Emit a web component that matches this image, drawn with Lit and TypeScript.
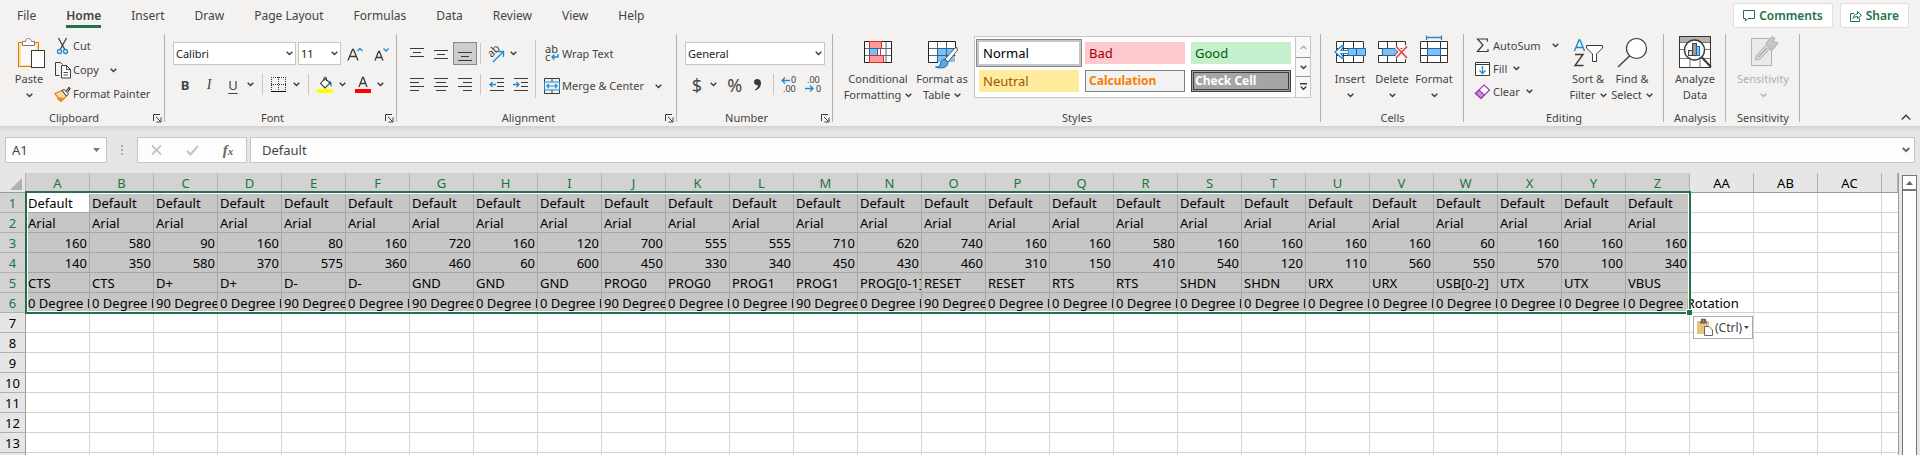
import { LitElement, html, svg, css } from "lit";
import { customElement, state } from "lit/decorators.js";
import { classMap } from "lit/directives/class-map.js";

const INK = "#3b3a39";
const BLUE = "#1e8bcd";

const icon = (w: number, h: number, body: unknown) =>
  html`<svg width=${w} height=${h} viewBox="0 0 ${w} ${h}" fill="none" aria-hidden="true">${body}</svg>`;

const chev = (color = INK) =>
  icon(7, 5, svg`<path d="M.7 .8 3.5 3.5 6.3 .8" stroke=${color} stroke-width="1.4"/>`);

const lines = (ys: number[], spans: number[][]) =>
  icon(14, 16, svg`${ys.map((y, i) => svg`<path d="M${spans[i][0]} ${y}H${spans[i][1]}" stroke=${INK}/>`)}`);

const FULL = [0, 14];
const MID = [3, 11];

const ICONS = {
  paste: icon(32, 36, svg`
    <rect x="5.5" y="8.5" width="20" height="24" fill="#fbdf9f" stroke="#e07a10"/>
    <rect x="8" y="11" width="15" height="20" fill="#faf9f8"/>
    <path d="M9.5 11.500V7.500H12.500C13 5.500 14 4.500 15.500 4.500S18 5.500 18.500 7.500H21.500V11.500Z" fill="#fff" stroke="#777"/>
    <rect x="18.500" y="16.500" width="13" height="17" fill="#fff" stroke=${INK}/>`),
  cut: icon(17, 17, svg`
    <path d="M4.500 0 11 12M12.500 0 6 12" stroke=${INK} stroke-width="1.200"/>
    <circle cx="5.500" cy="13.500" r="2" stroke=${BLUE} stroke-width="1.300"/><circle cx="11.500" cy="13.500" r="2" stroke=${BLUE} stroke-width="1.300"/>`),
  copy: icon(17, 17, svg`
    <path d="M5.500 13.500H1.500V.500H6.500L8.500 2.500" stroke=${INK}/>
    <path d="M7.500 3.500H12.500L16.500 7.500V16H7.500Z" fill="#fff" stroke=${INK}/>
    <path d="M12.500 3.500V7.500H16.500M9.500 10.500H14M9.500 13H14" stroke=${INK} stroke-width=".9"/>`),
  painter: icon(17, 17, svg`
    <path d="M1 7.500 8 4.500 12.500 10 7 15.500 4 13 3.500 11Z" fill="#fbd9a0" stroke="#e07a10" stroke-width="1.200"/>
    <path d="M3.500 11 7 15.500 10 12Z" fill="#f08a24"/>
    <path d="M8 4.500 10.500 3.500 14.500 8 12.500 10Z" fill="#fff" stroke=${INK}/>
    <path d="M12 5.500 15 1.500 16 2.500 13.500 6.500" fill="#fff" stroke=${INK} stroke-width="1.200"/>`),
  grow: icon(16, 16, svg`<path d="M1 14.500 5.500 3.500H6.500L11 14.500M2.800 10.500H9.200" stroke=${INK} stroke-width="1.300"/><path d="M10.500 5 13 2.500 15.500 5" stroke=${BLUE} stroke-width="1.300"/>`),
  shrink: icon(16, 16, svg`<path d="M2 14.500 5.600 5.500H6.400L10 14.500M3.500 11.500H8.500" stroke=${INK} stroke-width="1.300"/><path d="M10.500 2.500 13 5 15.500 2.500" stroke=${BLUE} stroke-width="1.300"/>`),
  borders: icon(16, 16, svg`
    <path d="M0 .5H15M0 7.500H15M.5 0V14M7.500 0V14M14.500 0V14" stroke=${INK} stroke-dasharray="1 1"/>
    <path d="M0 14.500H15" stroke="#111"/>`),
  bucket: icon(16, 17, svg`
    <path d="M3.500 7.500 8 2.500 13 7 8 12Z" fill="#fff" stroke=${INK} stroke-width="1.100"/>
    <path d="M7 5V2.200C7 .8 9.500 .8 9.500 2.200V5" stroke=${INK}/>
    <path d="M12.200 4.500C14.500 5 15 7 14.500 11 13.500 9.500 12.500 8.500 13 7Z" fill="#1f6fb5"/>
    <rect y="13" width="16" height="4" fill="#ff0"/>`),
  fontColor: icon(16, 17, svg`<path d="M4 11 7.600 1.500H8.400L12 11M5.200 7.500H10.800" stroke=${INK} stroke-width="1.300"/><rect y="13" width="16" height="4" fill="#f00"/>`),
  alignTop: lines([2.5, 6.5, 10.500], [FULL, MID, FULL]),
  alignMiddle: lines([4.5, 8.5, 12.500], [FULL, MID, FULL]),
  alignBottom: lines([6.5, 10.500, 14.500], [FULL, MID, FULL]),
  left: lines([1.5, 5.5, 9.5, 13.500], [FULL, [0, 9], FULL, [0, 9]]),
  center: lines([1.5, 5.5, 9.5, 13.500], [FULL, [2, 12], FULL, [2, 12]]),
  right: lines([1.5, 5.5, 9.5, 13.500], [FULL, [5, 14], FULL, [5, 14]]),
  orient: icon(18, 18, svg`
    <text x="0" y="0" transform="translate(4.500 13) rotate(-45)" font-family="Noto Sans" font-size="11" fill=${INK}>ab</text>
    <path d="M6 17 16 7M11 6.500H16.500V12" stroke=${BLUE} stroke-width="1.400"/>`),
  outdent: icon(15, 14, svg`<path d="M1 .5H15M8 4.500H15M8 8.500H15M1 12.500H15" stroke=${INK}/><path d="M7 6.500H1M3.500 4 1 6.500 3.500 9" stroke=${BLUE} stroke-width="1.300"/>`),
  indent: icon(15, 14, svg`<path d="M1 .5H15M8 4.500H15M8 8.500H15M1 12.500H15" stroke=${INK}/><path d="M0 6.500H6M3.500 4 6 6.500 3.500 9" stroke=${BLUE} stroke-width="1.300"/>`),
  wrap: icon(16, 18, svg`
    <text x="1" y="8" font-family="Noto Sans" font-size="11" fill=${INK}>ab</text>
    <text x="1" y="16" font-family="Noto Sans" font-size="11" fill=${INK}>c</text>
    <path d="M14 9V12H8M10.500 9.500 8 12 10.500 14.800" stroke=${BLUE} stroke-width="1.400"/>`),
  merge: icon(16, 16, svg`
    <path d="M.5 .5H15.500V15.500H.5ZM8 .5V4M8 12V15.500" stroke=${INK}/>
    <rect x=".5" y="4" width="15" height="8" fill="#eaf4fb" stroke=${BLUE}/>
    <path d="M3 8H13M5 5.800 2.800 8 5 10.200M11 5.800 13.200 8 11 10.200" stroke=${BLUE} stroke-width="1.200"/>`),
  incDecimal: icon(17, 17, svg`
    <text x="10" y="7" font-family="Noto Sans" font-size="9" fill=${INK}>0</text>
    <text x="2" y="16" font-family="Noto Sans" font-size="9" fill=${INK}>.00</text>
    <path d="M9 4.500H1M4 1.500 1 4.500 4 7.500" stroke=${BLUE} stroke-width="1.300"/>`),
  decDecimal: icon(17, 17, svg`
    <text x="2" y="7" font-family="Noto Sans" font-size="9" fill=${INK}>.00</text>
    <text x="11" y="16" font-family="Noto Sans" font-size="9" fill=${INK}>0</text>
    <path d="M0 12.500H8M5 9.500 8 12.500 5 15.500" stroke=${BLUE} stroke-width="1.300"/>`),
  conditional: icon(32, 36, svg`
    <path d="M2.500 7.500H29.500V28.500H2.500ZM7.500 7.500V28.500M13 7.500V28.500M18.500 7.500V28.500M24 7.500V28.500M2.500 14.500H29.500M2.500 21.500H29.500" fill="#fff" stroke="#666"/>
    <path d="M2.500 7.500H29.500V28.500H2.500Z" stroke="#222"/>
    <rect x="7.500" y="7.500" width="12" height="7" fill="#ff9a9e" stroke="#dc2a22"/>
    <rect x="7.500" y="14.500" width="8" height="7" fill="#83beec" stroke="#1569b0"/>
    <rect x="7.500" y="21.500" width="14" height="7" fill="#ff9a9e" stroke="#dc2a22"/>`),
  formatTable: icon(32, 36, svg`
    <path d="M2.500 7.500H29.500V28.500H2.500Z" fill="#fff"/>
    <rect x="11" y="14" width="18" height="14" fill="#83beec"/>
    <path d="M11.500 7.500V28.500M20.500 7.500V28.500M2.500 14.500H29.500M2.500 21.500H29.500" stroke="#666"/>
    <path d="M11.500 28V14.500H29.500M20.500 14V28M11.500 21.500H29" stroke="#1569b0"/>
    <path d="M12 28.500H2.500V7.500H29.500V14" stroke="#222"/>
    <path d="M31 13.500 29 14 19 25 22 28 31.500 16Z" fill="#fff" stroke="#555"/>
    <path d="M19 25.500C15 25 14.500 29 14 31 13.500 33 11 33 9.500 33 15 35 22 34 22 28.500Z" fill="#5ea9e3" stroke="#1569b0"/>`),
  insertCells: icon(32, 36, svg`
    <path d="M2.500 7.500H29.500V28.500H2.500ZM9.500 7.500V28.500M19.500 7.500V28.500M2.500 14.500H29.500M2.500 21.500H29.500" fill="#fff" stroke="#333"/>
    <path d="M14 14.500H31.500V21.500H14ZM22.500 14.500V21.500" fill="#83beec" stroke="#1569b0"/>
    <path d="M14 16.500H7L9.500 12 8 11.500 1 18 8 24.500 9.500 24 7 19.500H14" fill="#f3f2f1" stroke=${BLUE} stroke-width="1.200"/>`),
  deleteCells: icon(32, 36, svg`
    <path d="M2.500 7.500H29.500V28.500H2.500ZM11.500 7.500V28.500M20.500 7.500V28.500M2.500 14.500H29.500M2.500 21.500H29.500" fill="#fff" stroke="#333"/>
    <path d="M20 15H31V22H20ZM0 15H6V21H0Z" fill="#f3f2f1"/>
    <path d="M6.500 14.500H18L22 18 18 21.500H6.500Z" fill="#83beec" stroke="#1569b0"/>
    <path d="M20 12.500 31 24M31 12.500 20 24" stroke="#f3f2f1" stroke-width="4"/>
    <path d="M20 12.500 31 24M31 12.500 20 24" stroke="#e8413a" stroke-width="1.600"/>`),
  formatCells: icon(32, 36, svg`
    <path d="M2.500 7.500H29.500V28.500H2.500ZM9.500 7.500V28.500M22.500 7.500V28.500M2.500 14.500H29.500M2.500 21.500H29.500" fill="#fff" stroke="#333"/>
    <rect x="9.500" y="14.500" width="13" height="7" fill="#83beec" stroke="#1569b0"/>
    <path d="M8.500 3.500H23.500M8.500 1.500V6M23.500 1.500V6" stroke=${BLUE} stroke-width="1.300"/>`),
  sum: icon(17, 17, svg`<path d="M13.500 4.500V2H3.500L9 8 3.500 14.500H14V12" stroke=${INK} stroke-width="1.200"/>`),
  fill: icon(17, 16, svg`<path d="M1.500 1.500H15.500V14.500H1.500ZM1.500 3.500H15.500" fill="#fff" stroke=${INK}/><path d="M8.500 5V12.500M5.500 9.500 8.500 12.500 11.500 9.500" stroke=${BLUE} stroke-width="1.300"/>`),
  clear: icon(17, 17, svg`<path d="M1.500 10.500 10 2 15.500 7 7 15.500Z" fill="#fff" stroke="#9a3fb0" stroke-width="1.200"/><path d="M1.500 10.500 5 7 10.500 12 7 15.500Z" fill="#c98ad6" stroke="#9a3fb0" stroke-width="1.200"/>`),
  sortFilter: icon(32, 36, svg`
    <path d="M2.500 17 7 6H8L12.500 17M4 13.500H11" stroke=${BLUE} stroke-width="1.400"/>
    <path d="M3 20.500H11L3 31.500H11.500" stroke=${INK} stroke-width="1.400"/>
    <path d="M14.500 11.500H30.500V14L24.500 20V27.500H20.500V20L14.500 14Z" fill="#fff" stroke=${INK}/>`),
  find: icon(32, 36, svg`<circle cx="20.500" cy="14.500" r="10" fill="#fff" stroke=${INK} stroke-width="1.200"/><path d="M13.500 22 2 33" stroke=${INK} stroke-width="1.300"/>`),
  analyze: icon(34, 36, svg`
    <path d="M1.500 2.500H32.500V33.500H1.500Z" fill="#fff" stroke="#333"/><rect x="2" y="3" width="30" height="5" fill="#b4b2b0"/>
    <path d="M1.500 8.500H32.500M1.500 15.500H32.500M1.500 24.500H32.500M12 24V33.500M22 24V33.500" stroke="#777"/>
    <path d="M1.500 2.500H32.500V33.500H1.500Z" stroke="#333"/>
    <circle cx="16.500" cy="16" r="10" fill="#fff" stroke=${INK} stroke-width="1.400"/>
    <path d="M24 23.500 33 33" stroke=${INK} stroke-width="2"/>
    <rect x="10.500" y="16.500" width="4" height="5" fill="#ddd" stroke="#444"/><rect x="14.500" y="9.500" width="4" height="12" fill="#999" stroke="#444"/><rect x="18.500" y="12.500" width="3" height="9" fill="#83beec" stroke="#1569b0"/>`),
  sensitivity: icon(32, 36, svg`
    <path d="M4.500 4.500H24.500V31.500H4.500Z" fill="#ebeae9" stroke="#b5b3b1"/>
    <path d="M9 22 20 10 23.500 14 13 25.500 8.500 26Z" fill="#d5d3d1" stroke="#b5b3b1"/><path d="M11.500 23 20 14" stroke="#999"/>
    <path d="M19 9 25 2.500 28 4.500 26 8 31 8.500 28 13 24.500 17Z" fill="#c8c6c4" stroke="#b0aeac"/>`),
  comma: icon(10, 14, svg`<path d="M1 4C1 1.800 2.500 1 4.300 1 6.500 1 8 2.500 8 5 8 9 5.500 11.500 2 12.500V11.500C4 10.500 5 9 5 7.300 2.500 7.500 1 6 1 4Z" fill=${INK}/>`),
  launcher: icon(9, 9, svg`<path d="M.5 7V.5H7M3 3 7.500 7.500M8 3.500V8H3.500" stroke=${INK}/>`),
};

const range = (n: number) => Array.from({ length: n }, (_, i) => i);
const colName = (i: number) => (i < 26 ? "" : "A") + String.fromCharCode(65 + (i % 26));

const COLS = 30;
const ROWS = 14;
const TURNED = "CEGJMO";
const SHEET: string[][] = [
  range(26).map(() => "Default"),
  range(26).map(() => "Arial"),
  "160 580 90 160 80 160 720 160 120 700 555 555 710 620 740 160 160 580 160 160 160 160 60 160 160 160".split(" "),
  "140 350 580 370 575 360 460 60 600 450 330 340 450 430 460 310 150 410 540 120 110 560 550 570 100 340".split(" "),
  "CTS CTS D+ D+ D- D- GND GND GND PROG0 PROG0 PROG1 PROG1 PROG[0-1] RESET RESET RTS RTS SHDN SHDN URX URX USB[0-2] UTX UTX VBUS".split(" "),
  range(26).map((i) => `${TURNED.includes(colName(i)) ? 90 : 0} Degree Rotation`),
];

const shared = css`
  * { box-sizing: border-box; }
  button, input, select { font: inherit; color: inherit; border: 0; margin: 0; padding: 0; background: none; border-radius: 0; outline: 0; }
  svg { display: block; flex: none; overflow: visible; }
`;

@customElement("excel-ribbon")
class ExcelRibbon extends LitElement {
  @state() tab = "Home";

  static styles = [shared, css`
    :host { display: block; background: #f3f2f1; color: #444; font-size: 11px; line-height: 16px; white-space: nowrap; }
    .top { display: flex; justify-content: space-between; height: 31px; padding: 0 12px 0 2px; }
    .tabs { display: flex; font-size: 12px; }
    .tab { display: flex; flex-direction: column; align-items: center; height: 28px; padding: 8px 15px 0; }
    .tab span { height: 17px; }
    .tab.active { font-weight: 600; }
    .tab.active::after { content: ""; width: 100%; height: 3px; background: #217346; }
    .actions { display: flex; gap: 9px; padding-top: 4px; }
    .action { display: flex; align-items: center; gap: 4px; height: 23px; padding: 0 9px 0 8px; background: #fff; border-radius: 2px; box-shadow: 0 0 0 1px #e1dfdd; color: #217346; font-weight: 600; font-size: 12px; }
    .body { display: flex; height: 95px; padding: 3px 0 1px; }
    .group { display: flex; flex-direction: column; justify-content: space-between; flex: none; background: linear-gradient(#b3b0ad, #b3b0ad) right top / 1px 88px no-repeat; }
    .caption { display: flex; align-items: center; height: 14px; }
    .caption span { flex: 1; text-align: center; }
    .launch { width: 9px; height: 9px; margin: 0 3px 0 5px; }
    .row { display: flex; align-items: center; }
    .top-row { display: flex; align-items: flex-start; }
    .stack { display: flex; flex-direction: column; }
    .rows { display: flex; flex-direction: column; gap: 8px; padding: 8px 0 0 8px; }
    .tool { display: grid; place-items: center; width: 24px; height: 23px; }
    .drop { display: grid; place-items: center; width: 10px; height: 23px; }
    .tool.on { background: #cfcdcb; border: 1px solid #8a8886; }
    .sep { width: 1px; height: 21px; background: #c8c6c4; margin: 0 3px; }
    .sep.tall { height: 58px; margin: 6px 0 0 3px; }
    .item { display: flex; align-items: center; gap: 2px; height: 24px; }
    .item span + svg { margin-left: 4px; }
    .item.spread span + svg { margin-left: 9px; }
    .short { width: 102px; padding-left: 10px; }
    .short .item { height: 23px; }
    .big { display: flex; flex-direction: column; align-items: center; }
    .big svg { margin-bottom: 1px; }
    .big .line { display: flex; align-items: center; gap: 4px; height: 16px; }
    .big .line svg { margin: 0; }
    .combo { display: grid; align-items: center; height: 23px; background: #fff; border: 1px solid #c8c6c4; }
    .combo select { grid-area: 1 / 1; appearance: none; width: 100%; height: 21px; padding: 0 2px; color: #222; }
    .combo svg { grid-area: 1 / 1; justify-self: end; margin-right: 2px; pointer-events: none; }
    .fontrow { display: grid; grid-template-columns: 123px 43px 24px 24px; column-gap: 2px; }
    .bold { font-weight: 700; font-size: 13px; }
    .italic { font-style: italic; font-family: "Liberation Serif", serif; font-size: 14px; }
    .under { text-decoration: underline; text-underline-offset: 3px; font-size: 13px; }
    .sign { font-size: 18px; }
    .clipboard { width: 165px; }
    .font { width: 232px; }
    .font .sep { margin: 0 4px 0 7px; }
    .font .drop + .tool, .number .drop + .tool { margin-left: 4px; }
    .alignment { width: 280px; }
    .number { width: 156px; }
    .number .rows { padding-right: 8px; }
    .styles { width: 488px; }
    .styles .top-row { padding-left: 13px; }
    .cells { width: 143px; }
    .cells .top-row { padding-left: 8px; }
    .editing { width: 200px; }
    .analysis { width: 62px; }
    .sensitivity { width: 74px; }
    .w42 { width: 42px; }
    .w44 { width: 44px; }
    .w50 { width: 50px; margin-left: 4px; }
    .w64 { width: 64px; }
    .faded { color: #b1afad; }
    .gallery { display: flex; margin-top: 2px; height: 62px; background: #fff; border: 1px solid #c8c6c4; }
    .swatches { display: grid; grid-template-columns: repeat(3, 100px); grid-auto-rows: 22px; gap: 6px; padding: 5px 4px; font-size: 13px; }
    .swatch { text-align: left; padding: 0 4px; line-height: 20px; }
    .normal { color: #000; outline: 2px solid #c8c6c4; outline-offset: 0; box-shadow: 0 0 0 3px #8a8886; }
    .bad { background: #ffc7ce; color: #9c0006; }
    .good { background: #c6efce; color: #006100; }
    .neutral { background: #ffeb9c; color: #9c5700; }
    .calculation { background: #f2f2f2; color: #fa7d00; border: 1px solid #7f7f7f; padding: 0 3px; font-size: 12px; font-weight: 700; }
    .check { background: #a5a5a5; color: #fff; border: 3px double #3f3f3f; padding: 0 1px; line-height: 16px; font-size: 12px; font-weight: 700; }
    .pager { display: grid; grid-template-rows: 20px 19px 21px; width: 15px; border-left: 1px solid #c8c6c4; }
    .pager button { display: grid; place-items: center; background: #f9f8f7; }
    .pager button + button { border-top: 1px solid #979593; }
    .collapse { margin: auto 9px 4px auto; }
  `];

  group(name: string, cls: string, content: unknown, launcher = false) {
    return html`<section class="group ${cls}" aria-label=${name}>
      ${content}
      <div class="caption"><span>${name}</span>${launcher ? html`<button class="launch" aria-label="${name} settings">${ICONS.launcher}</button>` : ""}</div>
    </section>`;
  }

  tool(label: string, body: unknown, cls = "") {
    return html`<button class="tool ${cls}" aria-label=${label}>${body}</button>`;
  }

  drop(label: string) {
    return html`<button class="drop" aria-label="${label} options">${chev()}</button>`;
  }

  item(glyph: unknown, label: string, arrow = false, cls = "") {
    return html`<button class="item ${cls}">${glyph}<span>${label}</span>${arrow ? chev() : ""}</button>`;
  }

  big(glyph: unknown, first: string, second: string, arrow: boolean, cls: string) {
    return html`<button class="big ${cls}">${glyph}
      <span class="line">${first}</span>
      <span class="line">${second}${arrow ? chev(cls.includes("faded") ? "#b1afad" : INK) : ""}</span></button>`;
  }

  combo(label: string, options: string[]) {
    return html`<div class="combo"><select aria-label=${label}>${options.map((o) => html`<option>${o}</option>`)}</select>${chev()}</div>`;
  }

  render() {
    const tabs = ["File", "Home", "Insert", "Draw", "Page Layout", "Formulas", "Data", "Review", "View", "Help"];
    return html`
      <div class="top">
        <nav class="tabs">${tabs.map((t) => html`<button class="tab ${classMap({ active: t === this.tab })}" @click=${() => (this.tab = t)}><span>${t}</span></button>`)}</nav>
        <div class="actions">
          <button class="action">${icon(13, 13, svg`<path d="M1.500 1.500H12.500V9.500H6L3.500 12V9.500H1.500Z" stroke="#217346"/>`)}Comments</button>
          <button class="action">${icon(13, 14, svg`<path d="M5 4.500H1.500V12.500H10.500V9.500" stroke="#217346"/><path d="M4 9.500C4.500 6.500 6 5 8.500 5V2.500L12.500 6.200 8.500 9.500V7.500C6.500 7.500 5 8 4 9.500Z" stroke="#217346"/>`)}Share</button>
        </div>
      </div>
      <div class="body">
        ${this.group("Clipboard", "clipboard", html`<div class="top-row">
          ${this.big(ICONS.paste, "Paste", "", true, "w50")}
          <div class="stack">
            ${this.item(ICONS.cut, "Cut")}
            ${this.item(ICONS.copy, "Copy", true, "spread")}
            ${this.item(ICONS.painter, "Format Painter")}
          </div></div>`, true)}
        ${this.group("Font", "font", html`<div class="rows">
          <div class="fontrow">
            ${this.combo("Font", ["Calibri", "Arial"])}${this.combo("Font size", ["11", "12", "14"])}
            ${this.tool("Increase font size", ICONS.grow)}${this.tool("Decrease font size", ICONS.shrink)}
          </div>
          <div class="row">
            ${this.tool("Bold", html`<span class="bold">B</span>`)}${this.tool("Italic", html`<span class="italic">I</span>`)}${this.tool("Underline", html`<span class="under">U</span>`)}
            ${this.drop("Underline")}<i class="sep"></i>
            ${this.tool("Borders", ICONS.borders)}${this.drop("Borders")}<i class="sep"></i>
            ${this.tool("Fill colour", ICONS.bucket)}${this.drop("Fill colour")}
            ${this.tool("Font colour", ICONS.fontColor)}${this.drop("Font colour")}
          </div></div>`, true)}
        ${this.group("Alignment", "alignment", html`<div class="top-row">
          <div class="rows">
            <div class="row">
              ${this.tool("Top align", ICONS.alignTop)}${this.tool("Middle align", ICONS.alignMiddle)}${this.tool("Bottom align", ICONS.alignBottom, "on")}
              <i class="sep"></i>${this.tool("Orientation", ICONS.orient)}${this.drop("Orientation")}
            </div>
            <div class="row">
              ${this.tool("Align left", ICONS.left)}${this.tool("Center", ICONS.center)}${this.tool("Align right", ICONS.right)}
              <i class="sep"></i>${this.tool("Decrease indent", ICONS.outdent)}${this.tool("Increase indent", ICONS.indent)}
            </div>
          </div>
          <i class="sep tall"></i>
          <div class="rows">${this.item(ICONS.wrap, "Wrap Text")}${this.item(ICONS.merge, "Merge & Center", true, "spread")}</div>
        </div>`, true)}
        ${this.group("Number", "number", html`<div class="rows">
          ${this.combo("Number format", ["General", "Number", "Currency"])}
          <div class="row">
            ${this.tool("Accounting format", html`<span class="sign">$</span>`)}${this.drop("Accounting format")}
            ${this.tool("Percent style", html`<span class="sign">%</span>`)}${this.tool("Comma style", ICONS.comma)}
            <i class="sep"></i>${this.tool("Increase decimal", ICONS.incDecimal)}${this.tool("Decrease decimal", ICONS.decDecimal)}
          </div></div>`, true)}
        ${this.group("Styles", "styles", html`<div class="top-row">
          ${this.big(ICONS.conditional, "Conditional", "Formatting", true, "w64")}
          ${this.big(ICONS.formatTable, "Format as", "Table", true, "w64")}
          <div class="gallery">
            <div class="swatches">
              <button class="swatch normal">Normal</button><button class="swatch bad">Bad</button><button class="swatch good">Good</button>
              <button class="swatch neutral">Neutral</button><button class="swatch calculation">Calculation</button><button class="swatch check">Check Cell</button>
            </div>
            <div class="pager">
              <button aria-label="Previous styles">${icon(7, 5, svg`<path d="M.7 4 3.500 1.300 6.300 4" stroke="#aaa" stroke-width="1.400"/>`)}</button>
              <button aria-label="Next styles">${chev()}</button>
              <button aria-label="More styles">${icon(7, 8, svg`<path d="M0 .7H7M.7 3.500 3.500 6.200 6.300 3.500" stroke=${INK} stroke-width="1.400"/>`)}</button>
            </div>
          </div></div>`)}
        ${this.group("Cells", "cells", html`<div class="top-row">
          ${this.big(ICONS.insertCells, "Insert", "", true, "w42")}${this.big(ICONS.deleteCells, "Delete", "", true, "w42")}${this.big(ICONS.formatCells, "Format", "", true, "w42")}
        </div>`)}
        ${this.group("Editing", "editing", html`<div class="top-row">
          <div class="stack short">
            ${this.item(ICONS.sum, "AutoSum", true, "spread")}${this.item(ICONS.fill, "Fill", true)}${this.item(ICONS.clear, "Clear", true)}
          </div>
          ${this.big(ICONS.sortFilter, "Sort &", "Filter", true, "w44")}${this.big(ICONS.find, "Find &", "Select", true, "w44")}
        </div>`)}
        ${this.group("Analysis", "analysis", this.big(ICONS.analyze, "Analyze", "Data", false, ""))}
        ${this.group("Sensitivity", "sensitivity", this.big(ICONS.sensitivity, "Sensitivity", "", true, "faded"))}
        <button class="collapse" aria-label="Collapse ribbon">${icon(10, 7, svg`<path d="M.7 5.500 5 1.200 9.300 5.500" stroke=${INK} stroke-width="1.400"/>`)}</button>
      </div>`;
  }
}

@customElement("formula-bar")
class FormulaBar extends LitElement {
  static styles = [shared, css`
    :host { display: flex; padding: 11px 5px 10px; background: linear-gradient(#d2d2d2, #e6e6e6 6px); color: #444; font-size: 13px; }
    .box { display: flex; align-items: center; height: 26px; background: #fdfdfd; border: 1px solid #c6c6c6; }
    .name { width: 102px; padding-right: 6px; }
    .name input { flex: 1; min-width: 0; padding-left: 6px; }
    .dots { display: grid; place-items: center; width: 30px; }
    .tools { width: 110px; margin-right: 3px; }
    .tools button { display: grid; place-items: center; width: 36px; height: 24px; }
    .fx { font: italic 700 15px "Liberation Serif", serif; color: #666; }
    .fx small { font-size: 11px; }
    .formula { flex: 1; padding-right: 4px; }
    .formula input { flex: 1; padding-left: 11px; }
  `];

  render() {
    return html`
      <div class="box name"><input aria-label="Name box" .value=${"A1"}>${icon(7, 4, svg`<path d="M0 0H7L3.500 4Z" fill="#777"/>`)}</div>
      <div class="dots">${icon(2, 10, svg`<path d="M0 0H2V2H0ZM0 4H2V6H0ZM0 8H2V10H0Z" fill="#aaa"/>`)}</div>
      <div class="box tools">
        <button aria-label="Cancel">${icon(11, 10, svg`<path d="M1 .5 10 9.500M10 .5 1 9.500" stroke="#c4c4c4" stroke-width="1.800"/>`)}</button>
        <button aria-label="Enter">${icon(13, 11, svg`<path d="M1 6 4.500 9.500 12 1" stroke="#c4c4c4" stroke-width="2.200"/>`)}</button>
        <button aria-label="Insert function"><span class="fx">f<small>x</small></span></button>
      </div>
      <div class="box formula"><input aria-label="Formula" .value=${"Default"}>${icon(8, 6, svg`<path d="M.8 1 4 4.200 7.200 1" stroke="#666" stroke-width="2"/>`)}</div>`;
  }
}

@customElement("sheet-grid")
class SheetGrid extends LitElement {
  static styles = [shared, css`
    :host { display: flex; overflow: hidden; background: #e6e6e6; font-size: 13px; line-height: 17px; }
    .sheet { position: relative; flex: 1; min-width: 0; }
    table { table-layout: fixed; width: 100%; border-collapse: separate; border-spacing: 0; background: #fff; border-right: 1px solid #9b9b9b; color: #000; }
    .rowhead { width: 26px; }
    .col { width: 64px; }
    td, th { height: 20px; padding: 2px 2px 0; border: 0 solid #d4d4d4; border-width: 0 1px 1px 0; font-weight: 400; white-space: nowrap; overflow: hidden; }
    th { background: #e6e6e6; border-color: #b1b1b1; text-align: center; padding: 2px 0 0; }
    thead th { border-bottom-color: #9b9b9b; }
    tbody th { border-right-color: #9b9b9b; }
    th.picked { background: #d2d2d2; color: #217346; }
    tr td:last-child { border-right: 0; }
    .corner svg { margin: 0 3px 0 auto; }
    .in { background: #c6c6c6; border-color: #a6a6a6; }
    .current { background: #fff; }
    .num { text-align: right; }
    .spill { overflow: visible; }
    .selection { position: absolute; left: 25px; top: 18px; width: 1666px; height: 123px; border: 2px solid #217346; box-shadow: inset 0 0 0 1px #fff; pointer-events: none; }
    .handle { position: absolute; right: -3px; bottom: -3px; width: 6px; height: 6px; background: #217346; border: 0 solid #fff; border-width: 1px 0 0 1px; }
    .options { position: absolute; left: 1693px; top: 143px; display: flex; align-items: center; gap: 2px; height: 23px; padding: 0 3px; background: #fff; border: 1px solid #ababab; color: #444; font-size: 12px; }
    .bar { display: flex; flex-direction: column; width: 15px; margin: 2px 3px 0 3px; }
    .up { display: grid; place-items: center; height: 15px; background: #fff; border: 1px solid #767676; }
    .thumb { flex: 1; background: #fff; border: 1px solid #767676; border-bottom: 0; }
  `];

  cell(r: number, c: number) {
    const text = SHEET[r]?.[c] ?? "";
    const cls = {
      in: r < 6 && c < 26,
      current: r === 0 && c === 0,
      num: r === 2 || r === 3,
      spill: r === 5 && c === 25,
    };
    return html`<td class=${classMap(cls)}>${text}</td>`;
  }

  render() {
    return html`
      <div class="sheet">
        <table>
          <colgroup><col class="rowhead">${range(COLS - 1).map(() => html`<col class="col">`)}<col></colgroup>
          <thead><tr>
            <th class="corner" aria-label="Select all">${icon(12, 12, svg`<path d="M12 0V12H0Z" fill="#b1b1b1"/>`)}</th>
            ${range(COLS).map((c) => html`<th scope="col" class=${classMap({ picked: c < 26 })}>${c < COLS - 1 ? colName(c) : ""}</th>`)}
          </tr></thead>
          <tbody>${range(ROWS).map((r) => html`<tr>
            <th scope="row" class=${classMap({ picked: r < 6 })}>${r + 1}</th>
            ${range(COLS).map((c) => this.cell(r, c))}
          </tr>`)}</tbody>
        </table>
        <div class="selection"><i class="handle"></i></div>
        <button class="options" aria-label="Paste options">${icon(16, 17, svg`
          <path d="M0 2H12V15H0Z" fill="#ebc07c"/><path d="M3 3.500H10M5 2.500V.8H8V2.500" stroke="#666" stroke-width="2"/>
          <path d="M7.500 7.500H12L15.500 11V16.500H7.500Z" fill="#fff" stroke="#666"/>`)}(Ctrl)${icon(5, 3, svg`<path d="M0 0H5L2.500 3Z" fill="#444"/>`)}</button>
      </div>
      <div class="bar">
        <button class="up" aria-label="Scroll up">${icon(7, 4, svg`<path d="M0 4H7L3.500 0Z" fill="#666"/>`)}</button>
        <div class="thumb"></div>
      </div>`;
  }
}

@customElement("app-root")
class AppRoot extends LitElement {
  static styles = css`
    :host { display: flex; flex-direction: column; height: 100vh; overflow: hidden; background: #e6e6e6; font-family: "Noto Sans", "Open Sans", sans-serif; }
    sheet-grid { flex: 1; min-height: 0; }
  `;

  render() {
    return html`<excel-ribbon></excel-ribbon><formula-bar></formula-bar><sheet-grid></sheet-grid>`;
  }
}
